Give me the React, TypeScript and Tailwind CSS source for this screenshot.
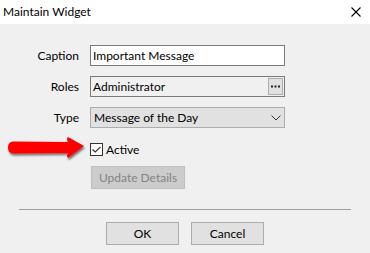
import React from "react";

export default function App() {
  const font = { fontFamily: 'Lato, "Noto Sans", sans-serif' };
  return (
    <div className="w-[370px] h-[253px] bg-[#f0f0f0] text-[12px] text-black relative overflow-hidden" style={font}>
      {/* title bar */}
      <div className="h-[24px] bg-white flex items-center justify-between pl-[3px] pr-[9px]">
        <span className="text-[12px] leading-none">Maintain Widget</span>
        <svg width="10" height="10" viewBox="0 0 10 10" className="block">
          <path d="M0.5 0.5 L9.5 9.5 M9.5 0.5 L0.5 9.5" stroke="#000" strokeWidth="1.1" />
        </svg>
      </div>

      {/* form */}
      <div className="pt-[21px]">
        <div className="grid grid-cols-[80px_195px] gap-x-[10px] gap-y-[10px] items-center">
          <div className="text-right pr-[1px]">Caption</div>
          <div className="h-[21px] bg-white border border-[#7a7a7a] flex items-center px-[2px]">Important Message</div>

          <div className="text-right pr-[1px]">Roles</div>
          <div className="h-[21px] bg-[#f0f0f0] border border-[#7a7a7a] flex items-center pl-[2px] pr-[1px] justify-between">
            <span>Administrator</span>
            <div className="w-[15px] h-[17px] bg-[#e1e1e1] border border-[#adadad] flex items-center justify-center">
              <svg width="9" height="3" viewBox="0 0 9 3">
                <rect x="0" y="0.5" width="2" height="2" fill="#222" />
                <rect x="3.5" y="0.5" width="2" height="2" fill="#222" />
                <rect x="7" y="0.5" width="2" height="2" fill="#222" />
              </svg>
            </div>
          </div>

          <div className="text-right pr-[1px]">Type</div>
          <div className="h-[21px] bg-[#e1e1e1] border border-[#adadad] flex items-center pl-[3px] pr-[3px] justify-between">
            <span>Message of the Day</span>
            <svg width="10" height="6" viewBox="0 0 10 6">
              <path d="M0.5 0.5 L5 5 L9.5 0.5" stroke="#333" strokeWidth="1" fill="none" />
            </svg>
          </div>
        </div>

        <div className="pl-[90px] mt-[15px] h-[13px] flex items-center gap-[3px]">
          <div className="w-[13px] h-[13px] bg-white border border-[#333] flex items-center justify-center">
            <svg width="9" height="7" viewBox="0 0 9 7">
              <path d="M0.5 3.5 L3.3 6 L8.5 0.8" stroke="#333" strokeWidth="1.2" fill="none" />
            </svg>
          </div>
          <span className="leading-[13px]">Active</span>
        </div>

        <div className="pl-[91px] mt-[10px]">
          <div className="w-[94px] h-[23px] bg-[#cccccc] border border-[#bfbfbf] flex items-center justify-center text-[#838383]">
            Update Details
          </div>
        </div>

        <div className="mx-[19px] mt-[20px] h-px bg-[#a0a0a0]" />

        <div className="pl-[106px] mt-[12px] flex gap-[12px]">
          <div className="w-[73px] h-[23px] bg-[#e1e1e1] border border-[#adadad] flex items-center justify-center">OK</div>
          <div className="w-[73px] h-[23px] bg-[#e1e1e1] border border-[#adadad] flex items-center justify-center">Cancel</div>
        </div>
      </div>

      {/* red arrow annotation */}
      <svg className="absolute left-[6px] top-[134px]" width="82" height="28" viewBox="0 0 82 28">
        <defs>
          <filter id="sh" x="-10%" y="-20%" width="130%" height="160%">
            <feDropShadow dx="1" dy="2" stdDeviation="1.2" floodColor="#000" floodOpacity="0.55" />
          </filter>
        </defs>
        <path
          d="M7 7.5 L62 8 Q60 5 62 3 L78 12 L62 24 Q60 22 62 19 L7 19.5 Q2 19 2 13.5 Q2 8 7 7.5 Z"
          fill="#ff0000"
          filter="url(#sh)"
        />
      </svg>
    </div>
  );
}
